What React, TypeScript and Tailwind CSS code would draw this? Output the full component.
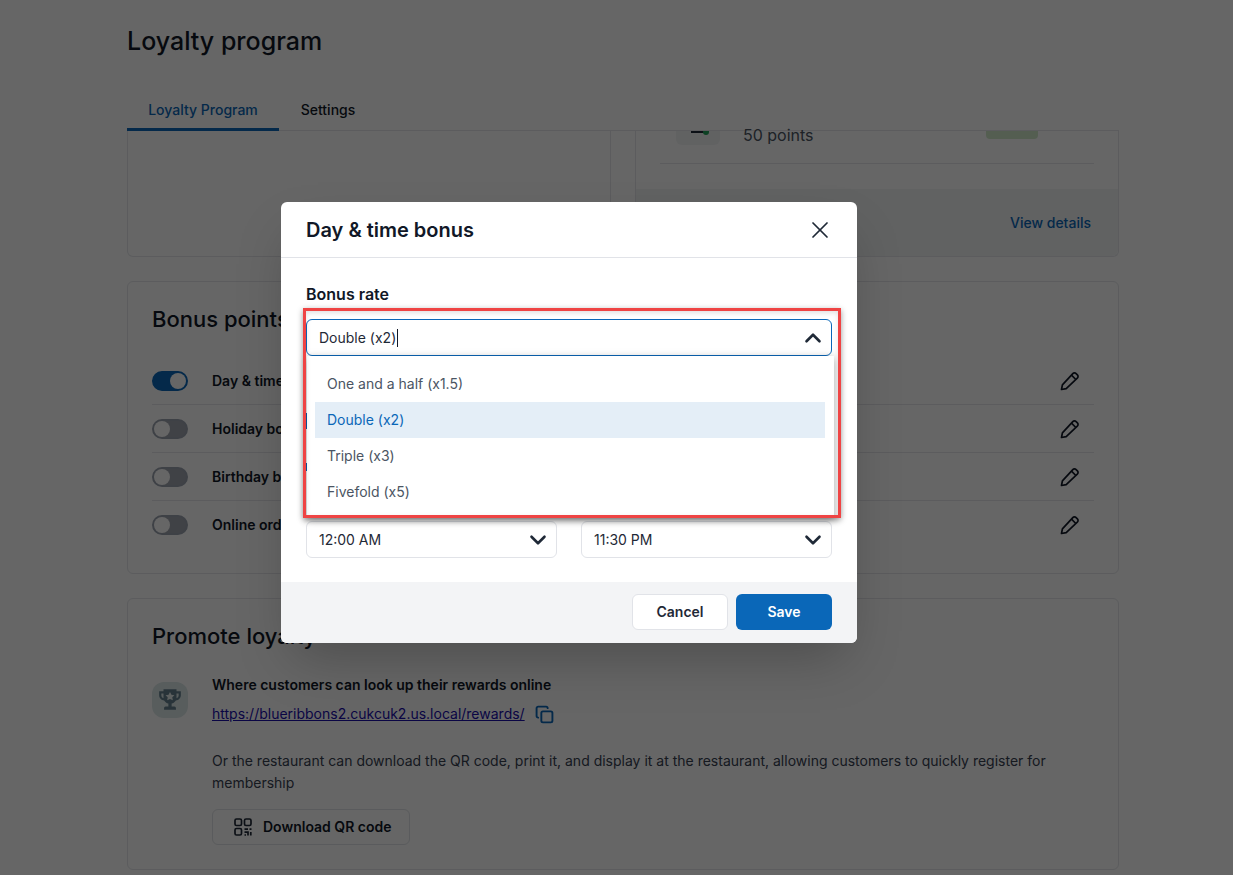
import React from 'react';
import { ChevronDown, ChevronUp, Copy, X } from 'lucide-react';

const bonusRows = [
  { label: 'Day & time bonus', on: true },
  { label: 'Holiday bonus', on: false },
  { label: 'Birthday bonus', on: false },
  { label: 'Online ordering bonus', on: false },
];

const rateOptions = ['One and a half (x1.5)', 'Double (x2)', 'Triple (x3)', 'Fivefold (x5)'];

const PencilIcon = () => (
  <svg width="20" height="20" viewBox="0 0 20 20" fill="none" stroke="#111827" strokeWidth="1.7" strokeLinejoin="round">
    <path d="M1.500 18.500l.9-4.700L12.800 2.700a2.300 2.300 0 0 1 3.300-.1l1.300 1.300a2.300 2.300 0 0 1-.1 3.300L6.200 17.600l-4.700.9z" />
    <path d="M11.500 4.200l4.300 4.300" />
  </svg>
);

const QrIcon = () => (
  <svg width="18" height="18" viewBox="0 0 18 18" fill="none" stroke="#1f2937" strokeWidth="1.7">
    <rect x="1" y="1" width="6.5" height="6.5" rx="1.500" />
    <rect x="10.500" y="1" width="6.500" height="6.500" rx="1.500" />
    <rect x="1" y="10.500" width="6.500" height="6.500" rx="1.500" />
    <path d="M10.500 11.200h3.500M15.500 11.200H17.500M10.500 14.200h3.500V17.500M10.500 17h1.500M16.800 14v3.500" />
  </svg>
);

const TrophyIcon = () => (
  <svg width="26" height="26" viewBox="0 0 24 24" fill="#64808f">
    <path d="M6 2h12v2h4v3.500c0 2.600-2 4.600-4.600 4.900-.9 1.500-2.300 2.500-3.900 2.900V18h2.500c1 0 1.500.8 1.500 2v1H6.500v-1c0-1.200.5-2 1.500-2h2.500v-2.700c-1.600-.4-3-1.400-3.900-2.900C4 12.100 2 10.100 2 7.500V4h4V2zM4 6v1.500c0 1.300.8 2.400 2 2.800V6H4zm14 0v4.300c1.200-.4 2-1.500 2-2.800V6h-2z" />
    <path fill="#e8f0f0" d="M12 4.500l1.300 2.600 2.800.4-2 2 .5 2.800-2.600-1.300-2.600 1.300.5-2.800-2-2 2.800-.4z" />
  </svg>
);

const Toggle = ({ on }: { on: boolean }) => (
  <span
    className={`flex h-5 w-9 items-center rounded-full border-2 ${
      on ? 'justify-end border-[#0a67b8] bg-[#0a67b8]' : 'justify-start border-[#9ca3af] bg-[#a1a5ae]'
    }`}
  >
    <span className="h-4 w-4 rounded-full bg-white" />
  </span>
);

const TimeSelect = ({ value }: { value: string }) => (
  <div className="flex h-[37px] flex-1 items-center justify-between rounded-md border border-[#e1e3e8] bg-white pl-3 pr-[5px] text-sm text-[#1f2937]">
    <span>{value}</span>
    <ChevronDown className="h-[26px] w-[26px] text-[#1f2937]" strokeWidth={2.4} />
  </div>
);

export default function App() {
  return (
    <div className="relative h-[875px] w-full overflow-hidden bg-white font-['Inter',sans-serif] text-[#111827]">
      <div className="ml-[127px] w-[992px]">
        <h1 className="pb-[27px] pt-[26px] text-[25px] font-medium leading-[30px]">Loyalty program</h1>

        {/* Tabs */}
        <div className="flex h-[48px] border-b border-[#e5e7eb] text-sm font-medium leading-5">
          <div className="-mb-px w-[152px] border-b-[3px] border-[#0a67b8] pt-[17px] text-center text-[#0a67b8]">
            Loyalty Program
          </div>
          <div className="w-[98px] pt-[17px] text-center">Settings</div>
        </div>

        {/* Scrolled cards */}
        <div className="flex h-[126px] gap-6">
          <div className="flex-1 rounded-b-md border border-t-0 border-[#e5e7eb]" />
          <div className="flex flex-1 flex-col rounded-b-md border border-t-0 border-[#e5e7eb]">
            <div className="h-[33px] px-6">
              <div className="flex h-full items-start justify-between border-b border-[#e5e7eb]">
                <div className="flex items-start">
                  <div className="relative ml-[16px] h-[14px] w-[44px] rounded-b-md bg-[#f3f4f6]">
                    <span className="absolute left-[15px] top-0 h-[2px] w-[16px] bg-[#1f2937]" />
                    <span className="absolute left-[27px] top-0 h-[4px] w-[6px] rounded-b-sm bg-[#22a35a]" />
                  </div>
                  <span className="-mt-[8px] ml-[23px] text-base leading-6 text-[#4b5563]">50 points</span>
                </div>
                <span className="mr-[56px] h-[8px] w-[52px] rounded-b bg-[#d3ebcb]" />
              </div>
            </div>
            <div className="mt-[25px] flex flex-1 items-center justify-end rounded-b-md bg-[#f3f4f6] pr-[27px] text-sm font-medium text-[#0a67b8]">
              View details
            </div>
          </div>
        </div>

        {/* Bonus points */}
        <section className="mt-6 h-[293px] rounded-md border border-[#e5e7eb] px-6 pt-6">
          <h2 className="text-[22px] font-medium leading-[26px]">Bonus points</h2>
          <div className="mt-[25px]">
            {bonusRows.map((row) => (
              <div key={row.label} className="flex h-12 items-center border-b border-[#e5e7eb] last:border-b-0">
                <Toggle on={row.on} />
                <span className="ml-6 flex-1 text-sm font-semibold">{row.label}</span>
                <span className="mr-[14px]">
                  <PencilIcon />
                </span>
              </div>
            ))}
          </div>
        </section>

        {/* Promote loyalty */}
        <section className="mt-6 h-[272px] rounded-md border border-[#e5e7eb] px-6 pt-6">
          <h2 className="text-[22px] font-medium leading-[26px]">Promote loyalty</h2>
          <div className="mt-[33px] flex gap-6">
            <div className="flex h-9 w-9 shrink-0 items-center justify-center rounded-xl bg-[#dce8e8]">
              <TrophyIcon />
            </div>
            <div className="-mt-[7px] flex-1">
              <p className="text-sm font-semibold leading-5">Where customers can look up their rewards online</p>
              <div className="mt-[9px] flex items-center gap-[10px]">
                <a className="text-sm leading-5 text-[#1a0dab] underline">https://blueribbons2.cukcuk2.us.local/rewards/</a>
                <Copy className="h-[19px] w-[19px] text-[#0a67b8]" strokeWidth={2.4} />
              </div>
              <p className="mt-[26px] text-sm leading-[22px] text-[#374151]">
                Or the restaurant can download the QR code, print it, and display it at the restaurant, allowing customers to quickly register for membership
              </p>
              <button className="mt-[15px] flex h-9 w-[198px] items-center gap-[11px] rounded-md border border-[#e1e3e8] pl-[21px] text-sm font-semibold">
                <QrIcon />
                Download QR code
              </button>
            </div>
          </div>
        </section>
      </div>

      {/* Overlay + modal */}
      <div className="absolute inset-0 bg-black/60">
        <div className="absolute left-[281px] top-[202px] w-[576px] rounded-md bg-white shadow-2xl">
          <div className="flex h-[56px] items-center justify-between border-b border-[#e1e3e8] pl-[25px] pr-[23px]">
            <h3 className="text-[20px] font-semibold text-[#111827]">Day &amp; time bonus</h3>
            <X className="h-[28px] w-[28px] text-[#1f2937]" strokeWidth={1.5} />
          </div>

          <div className="px-[25px] pb-[24px] pt-[26px]">
            <div className="text-base font-semibold leading-5">Bonus rate</div>
            <div className="relative mt-[15px]">
              <div className="flex h-[37px] items-center justify-between rounded-md border border-[#0a67b8] bg-white pl-3 pr-[5px] text-sm text-[#1f2937]">
                <span className="border-r border-[#111827] pr-px leading-[18px]">Double (x2)</span>
                <ChevronUp className="h-[26px] w-[26px] text-[#1f2937]" strokeWidth={2.4} />
              </div>

              {/* Dropdown list */}
              <div className="absolute -right-[2px] left-[1px] top-[37px] z-10 bg-white pb-[8px] pl-[8px] pr-[9px] pt-[10px] shadow-[0_2px_8px_rgba(0,0,0,0.35)]">
                {rateOptions.map((opt) => (
                  <div
                    key={opt}
                    className={`flex h-9 items-center px-3 text-sm ${
                      opt === 'Double (x2)' ? 'bg-[#e4eef7] text-[#0a67b8]' : 'text-[#4b5563]'
                    }`}
                  >
                    {opt}
                  </div>
                ))}
              </div>

              {/* Red annotation box */}
              <div className="absolute -left-[3px] -right-[9px] -top-[11px] z-20 h-[210px] border-[3px] border-[#ef4444] shadow-[0_2px_6px_rgba(0,0,0,0.4),inset_0_2px_5px_rgba(0,0,0,0.12)]" />
            </div>

            {/* Fields hidden behind the list, only their left edges show */}
            <div className="h-[165px] pt-[57px]">
              <div className="h-4 w-[2px] bg-[#0a67b8]" />
              <div className="mt-[34px] h-2 w-[2px] bg-[#0a67b8]" />
            </div>

            <div className="flex gap-6">
              <TimeSelect value="12:00 AM" />
              <TimeSelect value="11:30 PM" />
            </div>
          </div>

          <div className="flex h-[61px] items-center justify-end gap-2 rounded-b-md bg-[#f3f4f6] pb-[1px] pr-[25px] text-sm font-semibold">
            <button className="h-9 w-[96px] rounded-md border border-[#e1e3e8] bg-white text-[#1f2937]">Cancel</button>
            <button className="h-9 w-[96px] rounded-md bg-[#0a67b8] text-white">Save</button>
          </div>
        </div>
      </div>
    </div>
  );
}
